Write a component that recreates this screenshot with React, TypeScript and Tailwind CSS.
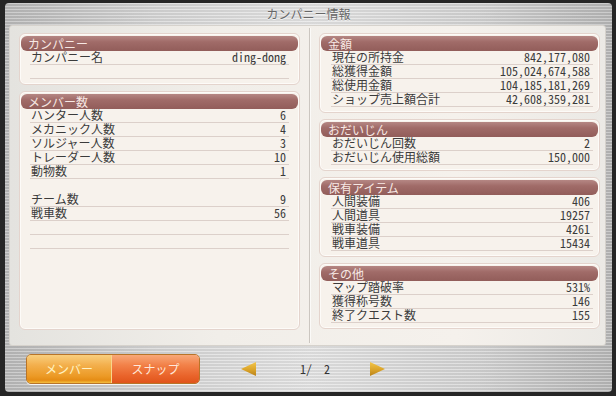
import React from "react";

type RowProps = {
  label?: string;
  value?: string;
  line?: boolean;
};

const Row: React.FC<RowProps> = ({ label = "", value = "", line = true }) => {
  return (
    <div
      className={`flex h-[14px] items-start justify-between pl-[1px] pr-[3px] font-['Noto_Sans_CJK_JP',sans-serif] text-[12px] text-[#3b3b3b] ${
        line ? "border-b border-[#dcd0ca]" : ""
      }`}
    >
      <span className="block leading-[12px]">{label}</span>
      <span className="block leading-[12px] [font-feature-settings:'hwid']">{value}</span>
    </div>
  );
};

type SectionProps = {
  title: string;
  side: "left" | "right";
  className?: string;
  children: React.ReactNode;
};

const Section: React.FC<SectionProps> = ({ title, side, className = "", children }) => {
  return (
    <div
      className={`rounded-[6px] border border-[#e4d4cd] bg-[#f7f2ec] px-[1px] pt-[2px] pb-[5px] shadow-[inset_0_0_0_1px_#fdfbf8] ${className}`}
    >
      <div className="h-[15px] rounded-[6px] bg-[linear-gradient(180deg,#b58784_0%,#a06b68_40%,#925d5a_100%)] pl-[7px] font-['Noto_Sans_CJK_JP',sans-serif] text-[12px] leading-[15px] text-[#f7e8e4]">
        {title}
      </div>
      <div className={side === "left" ? "ml-[9px] mr-[9px]" : "ml-[10px] mr-[5px]"}>
        {children}
      </div>
    </div>
  );
};

const Arrow: React.FC<{ dir: "left" | "right" }> = ({ dir }) => (
  <svg width="15" height="14" viewBox="0 0 15 14">
    <defs>
      <linearGradient id={`g-${dir}`} x1="0" y1="0" x2="0" y2="1">
        <stop offset="0%" stopColor="#f3c64a" />
        <stop offset="55%" stopColor="#dba42a" />
        <stop offset="100%" stopColor="#b9821a" />
      </linearGradient>
    </defs>
    <polygon
      points={dir === "left" ? "15,0 15,14 0,7" : "0,0 0,14 15,7"}
      fill={`url(#g-${dir})`}
    />
  </svg>
);

const metal =
  "bg-[repeating-linear-gradient(180deg,rgba(255,255,255,0.28)_0px,rgba(255,255,255,0.28)_1px,rgba(0,0,0,0.05)_1px,rgba(0,0,0,0.05)_3px),linear-gradient(90deg,#b9b9b9_0%,#d6d6d6_25%,#e4e4e4_50%,#d3d3d3_78%,#b7b7b7_100%)]";

export default function App() {
  return (
    <div className="h-[396px] w-[616px] bg-[#262626] pl-[5px] pt-[3px]">
      <div className={`flex h-[389px] w-[607px] flex-col rounded-[4px] ${metal}`}>
        <div className="flex h-[22px] items-center justify-center font-['Noto_Sans_CJK_JP',sans-serif] text-[12px] text-[#676767] [text-shadow:0_1px_0_#f2f2f2]">
          カンパニー情報
        </div>

        <div className="ml-[4px] flex h-[321px] w-[597px] rounded-[3px] border border-[#d6d2cc] bg-[linear-gradient(90deg,#e4e3df_0%,#f1eee9_35%,#f5f1ec_75%,#ebe9e5_100%)]">
          <div className="flex w-[299px] flex-col gap-[6px] pb-[15px] pl-[9px] pr-[9px] pt-[7px]">
            <Section title="カンパニー" side="left">
              <Row label="カンパニー名" value="ding-dong" />
              <Row />
            </Section>
            <Section title="メンバー数" side="left" className="flex-1">
              <Row label="ハンター人数" value="6" />
              <Row label="メカニック人数" value="4" />
              <Row label="ソルジャー人数" value="3" />
              <Row label="トレーダー人数" value="10" />
              <Row label="動物数" value="1" />
              <Row line={false} />
              <Row label="チーム数" value="9" />
              <Row label="戦車数" value="56" />
              <Row />
              <Row />
            </Section>
          </div>

          <div className="my-[2px] w-px bg-[#cbc6c0] shadow-[1px_0_0_#fbfaf8]" />

          <div className="flex w-[295px] flex-col gap-[6px] pb-[15px] pl-[9px] pr-[5px] pt-[7px]">
            <Section title="金額" side="right">
              <Row label="現在の所持金" value="842,177,080" />
              <Row label="総獲得金額" value="105,024,674,588" />
              <Row label="総使用金額" value="104,185,181,269" />
              <Row label="ショップ売上額合計" value="42,608,359,281" />
            </Section>
            <Section title="おだいじん" side="right">
              <Row label="おだいじん回数" value="2" />
              <Row label="おだいじん使用総額" value="150,000" />
            </Section>
            <Section title="保有アイテム" side="right">
              <Row label="人間装備" value="406" />
              <Row label="人間道具" value="19257" />
              <Row label="戦車装備" value="4261" />
              <Row label="戦車道具" value="15434" />
            </Section>
            <Section title="その他" side="right">
              <Row label="マップ踏破率" value="531%" />
              <Row label="獲得称号数" value="146" />
              <Row label="終了クエスト数" value="155" />
            </Section>
          </div>
        </div>

        <div className="flex h-[46px] items-center pl-[21px]">
          <div className="flex h-[30px] overflow-hidden rounded-[5px] border border-[#b87428] shadow-[0_1px_0_#f6f6f6]">
            <div className="flex w-[85px] items-center justify-center border-r border-[#f8d58c] bg-[linear-gradient(180deg,#f9cf7e_0%,#f3b04e_35%,#ec9a26_75%,#e58c14_90%,#f4c040_100%)] font-['Noto_Sans_CJK_JP',sans-serif] text-[12px] text-[#fff2c6] [text-shadow:0_0_2px_#f2b040]">
              メンバー
            </div>
            <div className="flex w-[87px] items-center justify-center bg-[linear-gradient(180deg,#f8a878_0%,#f2824a_35%,#e9632a_75%,#e0541a_100%)] font-['Noto_Sans_CJK_JP',sans-serif] text-[12px] text-[#ffe8da] [text-shadow:0_0_2px_#f07030]">
              スナップ
            </div>
          </div>
          <div className="ml-[41px] flex items-center">
            <Arrow dir="left" />
          </div>
          <div className="ml-[44px] flex w-[70px] font-['Noto_Sans_CJK_JP',sans-serif] text-[12px] text-[#333] [font-feature-settings:'hwid']">
            <span>1/</span>
            <span className="ml-[12px]">2</span>
          </div>
          <div className="flex items-center">
            <Arrow dir="right" />
          </div>
        </div>
      </div>
    </div>
  );
}
